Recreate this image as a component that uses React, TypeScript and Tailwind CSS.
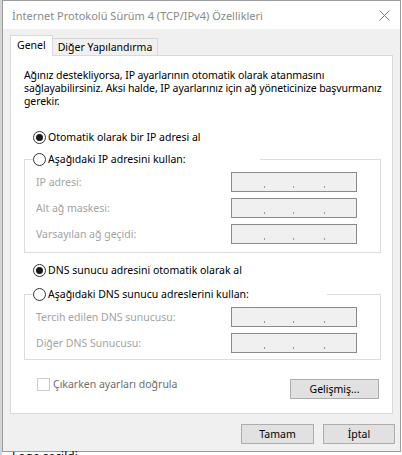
import React from 'react';

const font = { fontFamily: '"Noto Sans", "Segoe UI", sans-serif' };

function Radio({ checked }: { checked?: boolean }) {
  return (
    <span className="flex h-[13px] w-[13px] shrink-0 items-center justify-center rounded-full border border-[#333333] bg-white">
      {checked && <span className="h-[7px] w-[7px] rounded-full bg-[#1a1a1a]" />}
    </span>
  );
}

function IpBox() {
  return (
    <div className="flex h-[20px] w-[126px] items-start border border-[#8a8a8a] bg-[#f0f0f0] pt-[13px]">
      <span className="ml-[32px] h-[2px] w-px bg-[#9a9a9a]" />
      <span className="ml-[28px] h-[2px] w-px bg-[#9a9a9a]" />
      <span className="ml-[30px] h-[2px] w-px bg-[#9a9a9a]" />
    </div>
  );
}

function Field({ label }: { label: string }) {
  return (
    <div className="flex h-[20px] items-center pl-[3px]">
      <span className="w-[195px] text-[#a3a3a3]">{label}</span>
      <IpBox />
    </div>
  );
}

function Button({ children, w }: { children: React.ReactNode; w: string }) {
  return (
    <button type="button" className={`flex h-[20px] items-center justify-center border border-[#adadad] bg-[#e1e1e1] text-black ${w}`}>
      {children}
    </button>
  );
}

export default function App() {
  return (
    <div className="flex h-[455px] w-[402px] overflow-hidden bg-white text-[10.5px] leading-[13px] text-black" style={font}>
      <div className="h-full w-[2px] bg-[#d4d4d4]" />

      <div className="flex w-[399px] flex-col">
        <div className="flex h-[452px] shrink-0 flex-col border border-[#9c9c9c]">
          {/* title bar */}
          <div className="flex h-[28px] items-center justify-between bg-white pl-[9px] pr-[8px]">
            <span className="text-[11px] text-[#8a8a8a]">İnternet Protokolü Sürüm 4 (TCP/IPv4) Özellikleri</span>
            <svg width="11" height="11" viewBox="0 0 11 11" className="mr-[2px]">
              <path d="M0.5 0.5 L10.5 10.5 M10.5 0.5 L0.5 10.5" stroke="#7a7a7a" strokeWidth="1" fill="none" />
            </svg>
          </div>

          <div className="flex flex-1 flex-col bg-[#f0f0f0]">
            {/* tabs */}
            <div className="ml-[7px] mt-[5px] flex h-[21px] items-end">
              <div className="relative z-10 -mb-px flex h-[21px] items-center border border-b-0 border-[#d9d9d9] bg-white px-[6px] pb-[1px]">
                Genel
              </div>
              <div className="flex h-[17px] items-center border border-b-0 border-l-0 border-[#d9d9d9] bg-[#f0f0f0] px-[5px]">
                Diğer Yapılandırma
              </div>
            </div>

            {/* panel */}
            <div className="ml-[7px] flex h-[359px] w-[383px] flex-col border border-[#d9d9d9] bg-white">
              <p className="whitespace-nowrap pl-[13px] pt-[13px] tracking-[-0.1px]">
                Ağınız destekliyorsa, IP ayarlarının otomatik olarak atanmasını
                <br />
                sağlayabilirsiniz. Aksi halde, IP ayarlarınız için ağ yöneticinize başvurmanız
                <br />
                gerekir.
              </p>

              <label className="ml-[22px] mt-[22px] flex h-[14px] items-center gap-[2px]">
                <Radio checked />
                <span>Otomatik olarak bir IP adresi al</span>
              </label>

              <fieldset className="ml-[13px] mt-[8px] w-[357px] border border-[#dcdcdc] pb-[8px] pl-[8px]">
                <legend className="flex h-[14px] w-[227px] items-center gap-[2px] bg-white">
                  <Radio />
                  <span>Aşağıdaki IP adresini kullan:</span>
                </legend>
                <div className="flex flex-col gap-[6px] pt-[6px]">
                  <Field label="IP adresi:" />
                  <Field label="Alt ağ maskesi:" />
                  <Field label="Varsayılan ağ geçidi:" />
                </div>
              </fieldset>

              <label className="ml-[22px] mt-[10px] flex h-[14px] items-center gap-[2px]">
                <Radio checked />
                <span>DNS sunucu adresini otomatik olarak al</span>
              </label>

              <fieldset className="ml-[13px] mt-[10px] w-[357px] border border-[#dcdcdc] pb-[6px] pl-[8px]">
                <legend className="flex h-[14px] w-[294px] items-center gap-[2px] bg-white">
                  <Radio />
                  <span>Aşağıdaki DNS sunucu adreslerini kullan:</span>
                </legend>
                <div className="flex flex-col gap-[6px] pt-[6px]">
                  <Field label="Tercih edilen DNS sunucusu:" />
                  <Field label="Diğer DNS Sunucusu:" />
                </div>
              </fieldset>

              <div className="mt-[18px] flex items-start justify-between pl-[26px] pr-[13px]">
                <label className="flex h-[13px] items-center gap-[3px] text-[#6d6d6d]">
                  <span className="h-[13px] w-[13px] border border-[#cccccc] bg-white" />
                  <span>Çıkarken ayarları doğrula</span>
                </label>
                <div className="mt-px">
                  <Button w="w-[89px]">Gelişmiş...</Button>
                </div>
              </div>
            </div>

            {/* dialog buttons */}
            <div className="mr-[5px] mt-[10px] flex justify-end gap-[9px]">
              <Button w="w-[73px]">Tamam</Button>
              <Button w="w-[72px]">İptal</Button>
            </div>
          </div>
        </div>
        <div className="pl-[10px] text-[12px] leading-[9px] text-black">Loge seçildi</div>
      </div>
    </div>
  );
}
